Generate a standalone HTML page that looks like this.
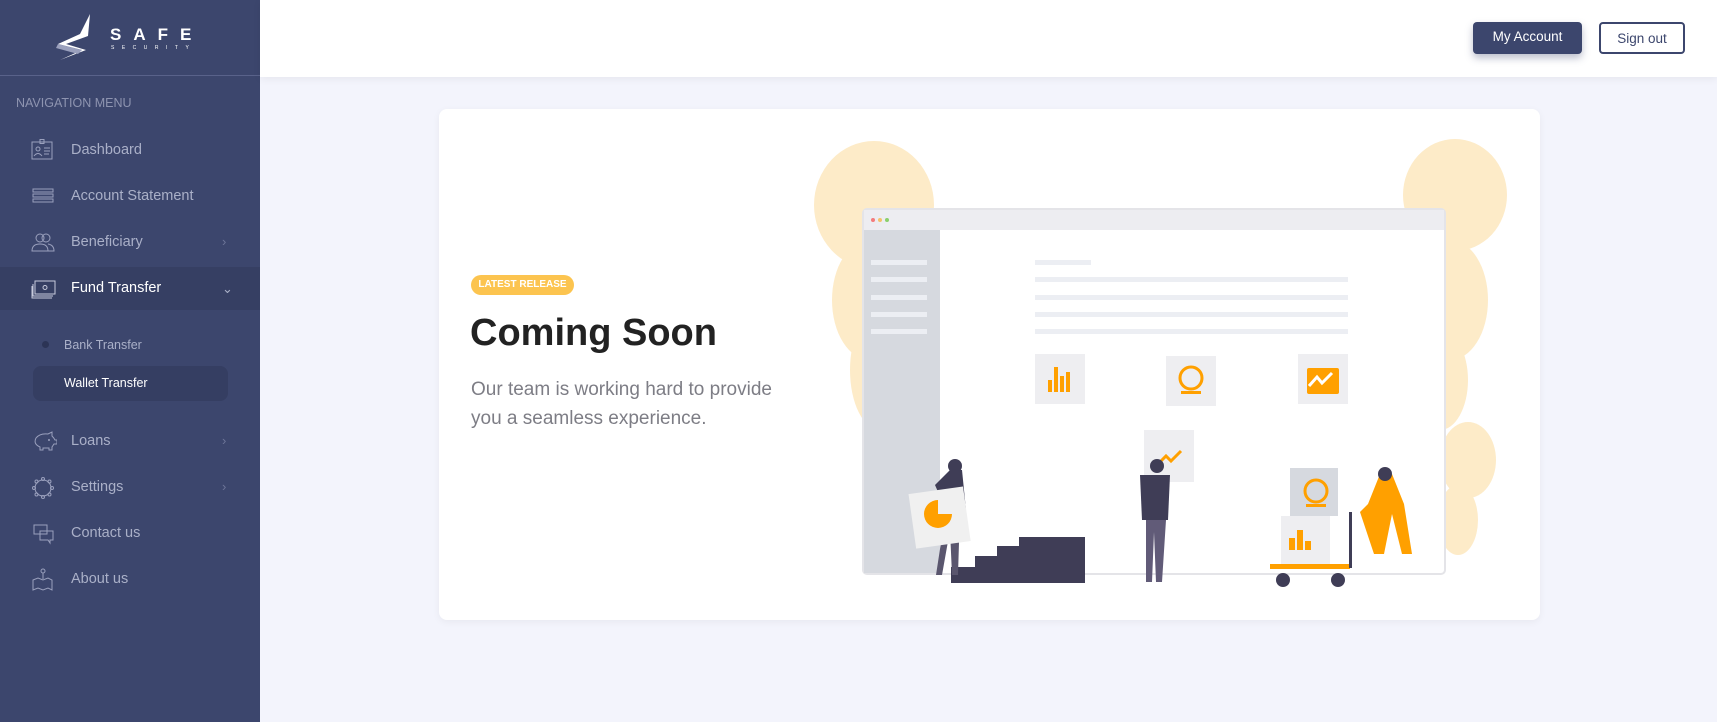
<!DOCTYPE html>
<html><head><meta charset="utf-8"><style>
*{margin:0;padding:0;box-sizing:border-box}
body{width:1717px;height:722px;overflow:hidden;background:#f3f4fc;font-family:"Liberation Sans",sans-serif;position:relative}
.side{position:absolute;left:0;top:0;width:260px;height:722px;background:#3c466d}
.logo{height:76px;border-bottom:1px solid #59628a;position:relative}
.navh{position:absolute;left:16px;top:96px;color:#8e94b0;font-size:12.5px}
.item{position:absolute;left:0;width:260px;height:44px;color:#aab0c8;font-size:14.5px;line-height:44px;padding-left:71px}
.item svg{position:absolute;left:31px;top:11px}
.item .ch{position:absolute;left:222px;top:0;color:#6d7598;font-size:13px}
.sub{position:absolute;left:64px;color:#aab0c8;font-size:12.5px}
.header{position:absolute;left:260px;top:0;right:0;height:77px;background:#fff;box-shadow:0 2px 8px rgba(0,0,0,.06)}
.btn{position:absolute;top:22px;height:32px;border-radius:4px;font-size:13.5px;line-height:30px;text-align:center}
.card{position:absolute;left:439px;top:109px;width:1101px;height:511px;background:#fff;border-radius:8px;box-shadow:0 2px 8px rgba(0,0,0,.05)}
</style></head><body>
<div class="side">
<div class="logo">
<svg width="260" height="76" style="position:absolute;left:0;top:0">
<polygon points="90,14 80,34 58,44 82,50 60,60 86,50 66,44 88,36" fill="#fff"/>
<polygon points="58,44 82,50 78,54 56,48" fill="#9aa0bd"/>
<text x="110" y="40" fill="#fff" font-size="17" font-weight="bold" letter-spacing="12" font-family="Liberation Sans">SAFE</text>
<text x="111" y="49" fill="#fff" font-size="5" letter-spacing="7.5" font-family="Liberation Sans">SECURITY</text>
</svg></div>
<div class="navh">NAVIGATION MENU</div>
<div class="item" style="top:128px"><svg width="24" height="22" fill="none" stroke="#9aa0bd" stroke-width="1"><rect x="1" y="3" width="20" height="17"/><rect x="9" y="0.5" width="4" height="4"/><circle cx="7" cy="10" r="2"/><path d="M3 17q4-5 8 0M13 9h6M13 12h6M13 15h5"/></svg>Dashboard</div>
<div class="item" style="top:174px"><svg width="24" height="22" fill="none" stroke="#9aa0bd" stroke-width="1"><rect x="2" y="4" width="20" height="3"/><rect x="2" y="9" width="20" height="3"/><rect x="2" y="14" width="20" height="3"/></svg>Account Statement</div>
<div class="item" style="top:220px"><svg width="24" height="22" fill="none" stroke="#9aa0bd" stroke-width="1"><circle cx="9" cy="7" r="4"/><circle cx="15" cy="7" r="4"/><path d="M1 20q0-7 8-7t8 7zM17 13q6 1 6 7h-6"/></svg>Beneficiary<span class="ch">›</span></div>
<div class="item" style="top:267px;height:43px;background:#363f63;color:#fff;line-height:43px"><svg width="26" height="22" fill="none" stroke="#c8cbdc" stroke-width="1"><rect x="4" y="3" width="20" height="13"/><circle cx="14" cy="9.5" r="2"/><path d="M2 6v12h20M1 8v12h20"/></svg>Fund Transfer<span class="ch" style="color:#aab0c8">⌄</span></div>
<div style="position:absolute;left:42px;top:341px;width:7px;height:7px;border-radius:50%;background:#2c3455"></div>
<div class="sub" style="top:338px">Bank Transfer</div>
<div style="position:absolute;left:33px;top:366px;width:195px;height:35px;border-radius:8px;background:#353e62"></div>
<div class="sub" style="top:376px;color:#fff">Wallet Transfer</div>
<div class="item" style="top:419px"><svg width="26" height="24" fill="none" stroke="#9aa0bd" stroke-width="1"><path d="M5 8q4-5 12-4l4-2v4q2 2 3 4h2v4h-3l-2 3v3h-3v-2h-6v2H9v-3Q2 14 5 8z"/><circle cx="18" cy="10" r=".5"/></svg>Loans<span class="ch">›</span></div>
<div class="item" style="top:465px"><svg width="26" height="24" fill="none" stroke="#9aa0bd" stroke-width="1"><circle cx="12" cy="12" r="8"/><circle cx="12" cy="3" r="1.5"/><circle cx="12" cy="21" r="1.5"/><circle cx="3" cy="12" r="1.5"/><circle cx="21" cy="12" r="1.5"/><circle cx="5.5" cy="5.5" r="1.5"/><circle cx="18.5" cy="18.5" r="1.5"/><circle cx="18.5" cy="5.5" r="1.5"/><circle cx="5.5" cy="18.5" r="1.5"/></svg>Settings<span class="ch">›</span></div>
<div class="item" style="top:511px"><svg width="26" height="24" fill="none" stroke="#9aa0bd" stroke-width="1"><path d="M3 3h13v9H3zM9 9h13v9h-3v3l-2-3H9z"/></svg>Contact us</div>
<div class="item" style="top:557px"><svg width="26" height="24" fill="none" stroke="#9aa0bd" stroke-width="1"><circle cx="12" cy="3" r="2"/><path d="M12 5v6M2 12l5-2 5 2 5-2 4 2v10l-4-2-5 2-5-2-5 2z"/></svg>About us</div>
</div>
<div class="header">
<div class="btn" style="left:1213px;width:109px;background:#3c466d;color:#fff;box-shadow:0 4px 8px rgba(60,70,109,.35)">My Account</div>
<div class="btn" style="left:1339px;width:86px;border:2px solid #3c466d;color:#3c466d">Sign out</div>
</div>
<div class="card"></div>
<div style="position:absolute;left:471px;top:275px;width:103px;height:20px;border-radius:10px;background:#fcc44f;color:#fff;font-size:10px;font-weight:bold;line-height:20px;text-align:center">LATEST RELEASE</div>
<div style="position:absolute;left:470px;top:312px;font-size:38px;font-weight:bold;color:#222">Coming Soon</div>
<div style="position:absolute;left:471px;top:375px;font-size:19px;line-height:29px;color:#7d7d85">Our team is working hard to provide<br>you a seamless experience.</div>
<svg width="1717" height="722" style="position:absolute;left:0;top:0">
<g fill="#fdebc8">
<ellipse cx="874" cy="205" rx="60" ry="64"/><ellipse cx="870" cy="300" rx="38" ry="60"/><ellipse cx="880" cy="370" rx="30" ry="60"/>
<ellipse cx="1455" cy="195" rx="52" ry="56"/><ellipse cx="1450" cy="300" rx="38" ry="60"/><ellipse cx="1440" cy="380" rx="28" ry="50"/>
<ellipse cx="1468" cy="460" rx="28" ry="38"/><ellipse cx="1458" cy="520" rx="20" ry="35"/>
</g>
<rect x="863" y="209" width="582" height="365" rx="4" fill="#fff" stroke="#e4e4e8" stroke-width="2"/>
<rect x="864" y="210" width="580" height="20" fill="#ededf1"/>
<circle cx="873" cy="220" r="2" fill="#f47c7c"/><circle cx="880" cy="220" r="2" fill="#f5c26b"/><circle cx="887" cy="220" r="2" fill="#8bd06b"/>
<rect x="864" y="230" width="76" height="343" fill="#d6d9df"/>
<g fill="#eceef3"><rect x="871" y="260" width="56" height="5"/><rect x="871" y="277" width="56" height="5"/><rect x="871" y="295" width="56" height="5"/><rect x="871" y="312" width="56" height="5"/><rect x="871" y="329" width="56" height="5"/>
<rect x="1035" y="260" width="56" height="5"/><rect x="1035" y="277" width="313" height="5"/><rect x="1035" y="295" width="313" height="5"/><rect x="1035" y="312" width="313" height="5"/><rect x="1035" y="329" width="313" height="5"/></g>
<g fill="#eeeef1"><rect x="1035" y="354" width="50" height="50"/><rect x="1166" y="356" width="50" height="50"/><rect x="1298" y="354" width="50" height="50"/><rect x="1144" y="430" width="50" height="52"/><rect x="1281" y="516" width="49" height="48"/></g>
<rect x="1290" y="468" width="48" height="48" fill="#d6d9df"/>
<g fill="#ffa000">
<rect x="1048" y="380" width="4" height="12"/><rect x="1054" y="367" width="4" height="25"/><rect x="1060" y="376" width="4" height="16"/><rect x="1066" y="372" width="4" height="20"/>
<rect x="1307" y="368" width="32" height="26" rx="2"/>
<rect x="1289" y="538" width="6" height="12"/><rect x="1297" y="530" width="6" height="20"/><rect x="1305" y="541" width="6" height="9"/>
<rect x="1270" y="564" width="80" height="5"/>
<path d="M1360 512l8-8 12-30h12l12 30 8 50h-10l-10-40-8 40h-10z"/>
</g>
<g fill="none" stroke="#ffa000" stroke-width="3"><circle cx="1191" cy="378" r="11"/><circle cx="1316" cy="491" r="11"/><path d="M1156 466l10-10 5 5 10-10"/></g>
<path d="M1309 386l8-9 5 6 10-10" stroke="#fff" stroke-width="3" fill="none"/>
<rect x="1181" y="391" width="20" height="3" fill="#ffa000"/><rect x="1306" y="504" width="20" height="3" fill="#ffa000"/>
<polygon points="951,583 951,567 975,567 975,556 997,556 997,546 1019,546 1019,537 1085,537 1085,583" fill="#3f3d56"/>
<g fill="#3f3d56">
<circle cx="955" cy="466" r="7"/><path d="M935 485l15-15h12l4 40h-20z"/><path d="M946 510h14l-2 65h-6l-2-45-8 45h-6z" fill="#5a566e"/>
<circle cx="1157" cy="466" r="7"/><path d="M1140 475h30l-2 45h-26z"/><path d="M1146 520h20l-4 62h-6l-2-50-2 50h-6z" fill="#615b78"/>
<circle cx="1385" cy="474" r="7"/><circle cx="1283" cy="580" r="7"/><circle cx="1338" cy="580" r="7"/>
<rect x="1349" y="512" width="3" height="56"/>
</g>
<rect x="912" y="490" width="55" height="55" fill="#f0f0f0" transform="rotate(-8 940 517)"/>
<path d="M938 500a14 14 0 1 0 14 14h-14z" fill="#ffa000"/>
</svg>
</body></html>
